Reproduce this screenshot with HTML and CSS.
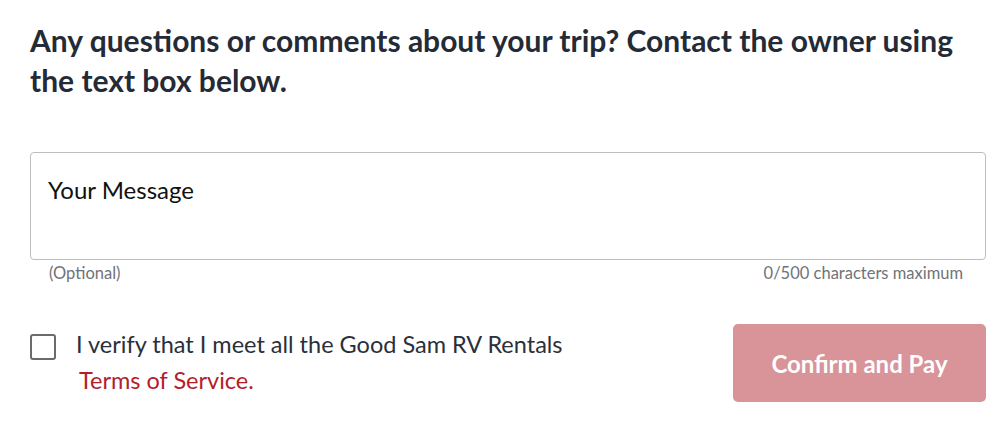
FILE: index.html
```html
<!DOCTYPE html>
<html>
<head>
<meta charset="utf-8">
<link rel="stylesheet" href="styles.css">
</head>
<body>
<div class="wrap">
  <h2 class="title">Any questions or comments about your trip? Contact the owner using the text box below.</h2>
  <div class="field">
    <div class="box"><span class="placeholder">Your Message</span></div>
    <div class="hints"><span>(Optional)</span><span>0/500 characters maximum</span></div>
  </div>
  <div class="bottom">
    <label class="verify">
      <span class="check"></span>
      <span class="vtext">I verify that I meet all the Good Sam RV Rentals<br><a class="tos" href="#">Terms of Service.</a></span>
    </label>
    <button class="pay">Confirm and Pay</button>
  </div>
</div>
</body>
</html>
```
FILE: styles.css
```css
html, body { margin: 0; padding: 0; background: #fff; }
body { font-family: Lato, "Noto Sans", sans-serif; }
.wrap { padding: 20px 22px 0 30px; }
.title {
  margin: 0;
  font-size: 30px;
  font-weight: 700;
  line-height: 40px;
  color: #252b36;
  max-width: 940px;
}
.field { margin-top: 52px; }
.box {
  height: 108px;
  border: 1px solid #bdbdbd;
  border-radius: 4px;
  box-sizing: border-box;
  padding: 22px 17px;
}
.placeholder { font-size: 24px; color: #111; }
.hints {
  display: flex;
  justify-content: space-between;
  padding: 3px 23px 0 19px;
  font-size: 16.5px;
  color: #6f7379;
}
.bottom {
  display: flex;
  justify-content: space-between;
  align-items: flex-start;
  margin-top: 41px;
}
.verify { display: flex; align-items: flex-start; }
.check {
  width: 22px; height: 22px;
  border: 2px solid #6b6b6b;
  border-radius: 3px;
  margin-top: 10px;
  flex: none;
}
.vtext {
  margin-left: 20px;
  font-size: 23.5px;
  line-height: 36px;
  color: #2a303b;
  padding-top: 2px;
}
.tos { color: #b3202a; text-decoration: none; margin-left: 3px; }
.pay {
  width: 253px; height: 78px;
  border: none;
  border-radius: 5px;
  background: #d99499;
  color: #fff;
  font-family: Lato, sans-serif;
  font-size: 24px;
  font-weight: 700;
}
```
